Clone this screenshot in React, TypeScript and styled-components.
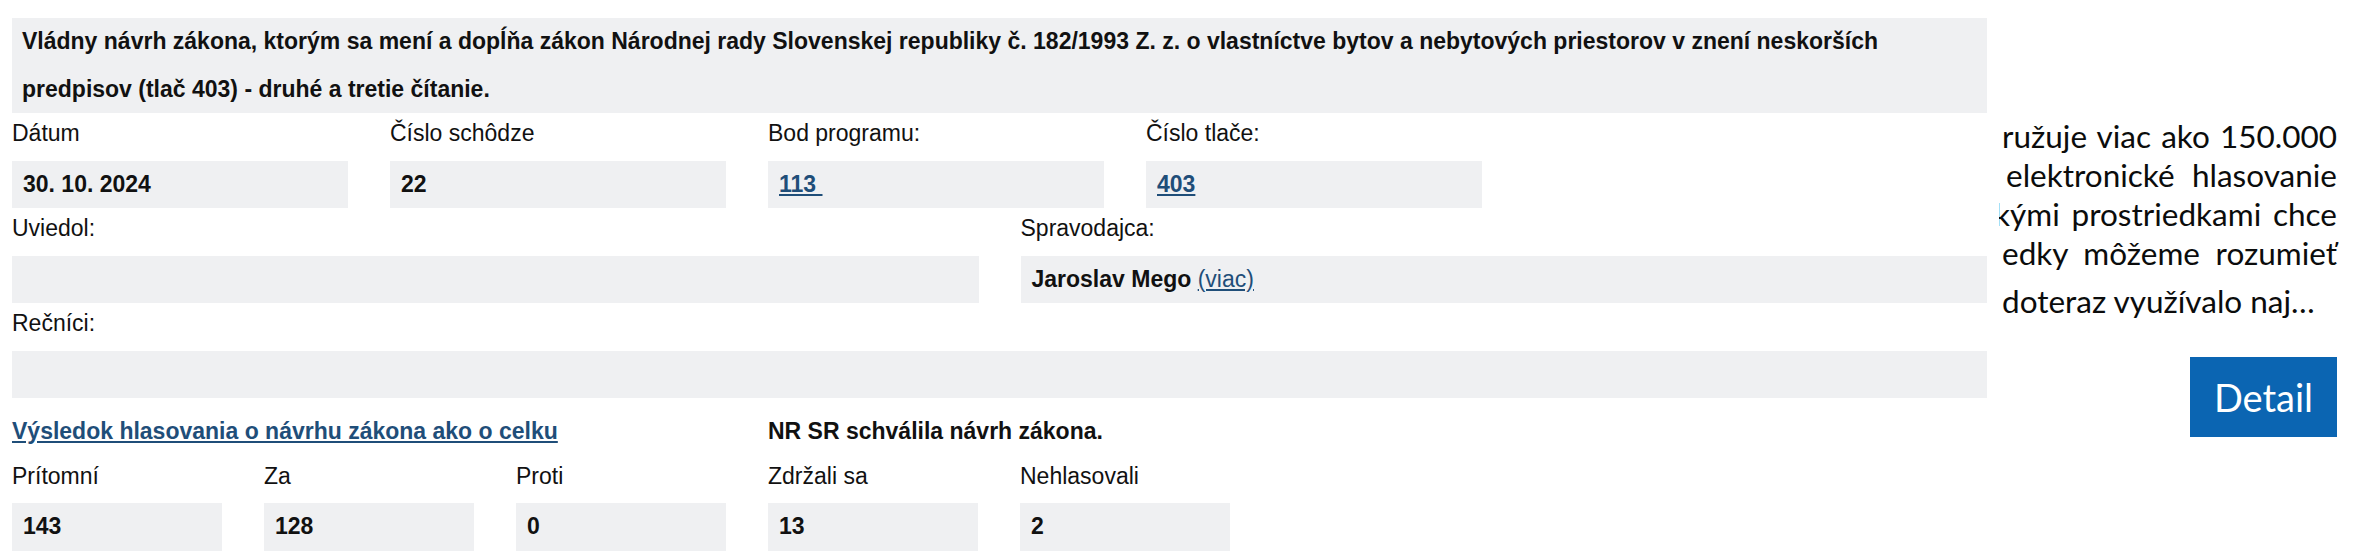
import React from 'react';
import styled, {createGlobalStyle} from 'styled-components';

const GlobalStyle = createGlobalStyle`
  html, body {
    margin: 0;
    padding: 0;
    background: #fff;
  }
  body {
    font-family: 'Liberation Sans', Arial, sans-serif;
    color: #111;
  }
`;

const teaser = [
  {text: 'ružuje viac ako 150.000', shift: 0},
  {text: 'elektronické hlasovanie', shift: 4},
  {text: 'kými prostriedkami chce', shift: -8},
  {text: 'edky môžeme rozumieť', shift: 0},
];

const votes = [
  {label: 'Prítomní', value: '143'},
  {label: 'Za', value: '128'},
  {label: 'Proti', value: '0'},
  {label: 'Zdržali sa', value: '13'},
  {label: 'Nehlasovali', value: '2'},
];

const App: React.FC = () => {
  return (
    <Page>
      <GlobalStyle />
      <Main>
        <Title>
          Vládny návrh zákona, ktorým sa mení a dopĺňa zákon Národnej rady
          Slovenskej republiky č. 182/1993 Z. z. o vlastníctve bytov a
          nebytových priestorov v znení neskorších
          <br />
          predpisov (tlač 403) - druhé a tretie čítanie.
        </Title>

        <Grid cols="repeat(4, 336px)">
          <Field>
            <Label>Dátum</Label>
            <Value>30. 10. 2024</Value>
          </Field>
          <Field>
            <Label>Číslo schôdze</Label>
            <Value>22</Value>
          </Field>
          <Field>
            <Label>Bod programu:</Label>
            <Value>
              <Link href="#">113&nbsp;</Link>
            </Value>
          </Field>
          <Field>
            <Label>Číslo tlače:</Label>
            <Value>
              <Link href="#">403</Link>
            </Value>
          </Field>
        </Grid>

        <Grid cols="1fr 1fr">
          <Field>
            <Label>Uviedol:</Label>
            <Value />
          </Field>
          <Field>
            <Label>Spravodajca:</Label>
            <Value>
              Jaroslav Mego&nbsp;<Link href="#" light>(viac)</Link>
            </Value>
          </Field>
        </Grid>

        <Field>
          <Label>Rečníci:</Label>
          <Value />
        </Field>

        <ResultRow>
          <Link href="#">Výsledok hlasovania o návrhu zákona ako o celku</Link>
          <Verdict>NR SR schválila návrh zákona.</Verdict>
        </ResultRow>

        <Grid cols="repeat(5, 210px)">
          {votes.map(v => (
            <Field key={v.label}>
              <Label>{v.label}</Label>
              <Value>{v.value}</Value>
            </Field>
          ))}
        </Grid>
      </Main>

      <Aside>
        <Teaser>
          {teaser.map(line => (
            <TeaserLine key={line.text} shift={line.shift}>
              {line.text}
            </TeaserLine>
          ))}
          <TeaserLast>doteraz využívalo naj…</TeaserLast>
        </Teaser>
        <DetailButton type="button">Detail</DetailButton>
      </Aside>
    </Page>
  );
};
export default App;

const Page = styled.div`
  display: flex;
  align-items: flex-start;
  padding: 18px 0 0 12px;
  width: 2378px;
  box-sizing: border-box;
`;

const Main = styled.div`
  width: 1975px;
  flex-shrink: 0;
  font-size: 23px;
  line-height: 47.5px;
`;

const Title = styled.div`
  background: #eff0f2;
  padding: 0 10px;
  font-weight: bold;
  white-space: nowrap;
`;

const Grid = styled.div<{cols: string}>`
  display: grid;
  grid-template-columns: ${p => p.cols};
  column-gap: 42px;
`;

const Field = styled.div`
  display: flex;
  flex-direction: column;
`;

const Label = styled.div`
  height: 47.5px;
  line-height: 40px;
  color: #111;
`;

const Value = styled.div`
  height: 47.5px;
  background: #eff0f2;
  padding: 0 11px;
  font-weight: bold;
  white-space: nowrap;
`;

const Link = styled.a<{light?: boolean}>`
  color: #1f4e79;
  text-decoration: underline;
  text-underline-offset: 2px;
  font-weight: ${p => (p.light ? 'normal' : 'bold')};
`;

const ResultRow = styled.div`
  display: grid;
  grid-template-columns: 714px 1fr;
  column-gap: 42px;
  margin-top: 10px;
`;

const Verdict = styled.span`
  font-weight: bold;
`;

const Aside = styled.aside`
  width: 341px;
  margin-left: 12px;
  padding-top: 99px;
  overflow: hidden;
  display: flex;
  flex-direction: column;
  align-items: flex-end;
  font-family: Lato, 'Noto Sans', sans-serif;
  color: #0b0c0c;
`;

const Teaser = styled.div`
  width: 335px;
  font-size: 31.5px;
  line-height: 39px;
  margin-right: 3px;
`;

const TeaserLine = styled.div<{shift: number}>`
  white-space: nowrap;
  text-align: justify;
  text-align-last: justify;
  word-spacing: -2px;
  margin-left: ${p => p.shift}px;
`;

const TeaserLast = styled.div`
  white-space: nowrap;
  margin-top: 9px;
`;

const DetailButton = styled.button`
  margin-top: 36px;
  margin-right: 3px;
  width: 147px;
  height: 80px;
  border: 0;
  background: #0b65b2;
  box-shadow: 0 5px 0 #0b3a64;
  color: #fff;
  font-family: Lato, 'Noto Sans', sans-serif;
  font-size: 38px;
  cursor: pointer;
`;
